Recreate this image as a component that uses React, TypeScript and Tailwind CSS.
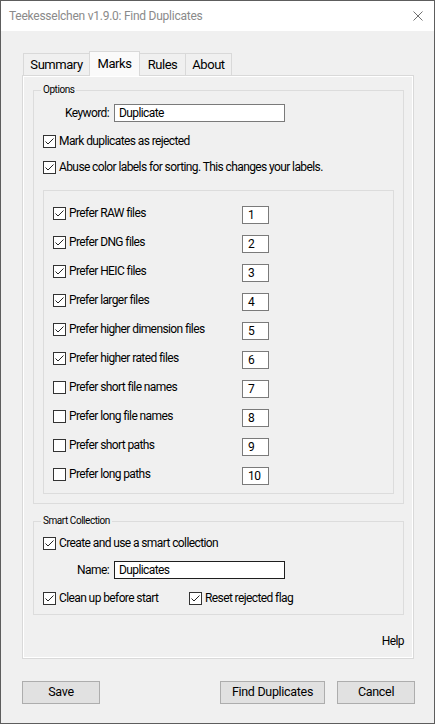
import type { ReactNode } from "react";

const ui = "font-[Roboto,sans-serif] tracking-[-0.6px] text-black";

function CheckBox({ checked }: { checked: boolean }) {
  return (
    <span className="flex h-[13px] w-[13px] shrink-0 items-center justify-center border border-[#333] bg-white">
      {checked && (
        <svg width="11" height="11" viewBox="0 0 11 11">
          <path d="M1.5 5.5 L4 8 L9.5 2.5" fill="none" stroke="#222" strokeWidth="1" />
        </svg>
      )}
    </span>
  );
}

function Check({ label, checked, className = "" }: { label: string; checked: boolean; className?: string }) {
  return (
    <label className={`flex h-[14px] items-center gap-[3px] text-[12px] leading-[14px] ${className}`}>
      <CheckBox checked={checked} />
      <span className="whitespace-nowrap">{label}</span>
    </label>
  );
}

function TextBox({ value, className = "" }: { value: string; className?: string }) {
  return (
    <div className={`flex h-[18px] items-center bg-white pl-[4px] text-[12px] ${className}`}>{value}</div>
  );
}

function Group({ title, className = "", children }: { title: string; className?: string; children: ReactNode }) {
  return (
    <fieldset className={`ml-[9px] w-[371px] border border-[#dcdcdc] ${className}`}>
      <legend className="ml-[7px] px-[2px] text-[10px] leading-[14px] tracking-[-0.45px]">{title}</legend>
      {children}
    </fieldset>
  );
}

const tabs = [
  { name: "Summary", w: "w-[67px]" },
  { name: "Marks", w: "w-[51px]" },
  { name: "Rules", w: "w-[47px]" },
  { name: "About", w: "w-[47px]" },
];

const prefs = [
  { label: "Prefer RAW files", on: true },
  { label: "Prefer DNG files", on: true },
  { label: "Prefer HEIC files", on: true },
  { label: "Prefer larger files", on: true },
  { label: "Prefer higher dimension files", on: true },
  { label: "Prefer higher rated files", on: true },
  { label: "Prefer short file names", on: false },
  { label: "Prefer long file names", on: false },
  { label: "Prefer short paths", on: false },
  { label: "Prefer long paths", on: false },
];

export default function App() {
  return (
    <div className={`flex h-[724px] w-[435px] flex-col border border-[#5d5d5d] bg-[#f0f0f0] ${ui}`}>
      {/* title bar */}
      <div className="flex h-[30px] shrink-0 items-center justify-between bg-white pl-[8px] pr-[11px]">
        <span className="text-[12px] tracking-[-0.25px] text-[#8a8a8a]">Teekesselchen v1.9.0: Find Duplicates</span>
        <svg width="10" height="10" viewBox="0 0 10 10">
          <path d="M0.5 0.5 L9.5 9.5 M9.5 0.5 L0.5 9.5" stroke="#707070" strokeWidth="1" />
        </svg>
      </div>

      {/* tab strip */}
      <div className="ml-[22px] mt-[20px] flex h-[24px] items-end">
        {tabs.map((t, i) => {
          const active = t.name === "Marks";
          return (
            <div
              key={t.name}
              className={`${t.w} ${i > 0 ? "-ml-px" : ""} flex items-center justify-center border border-b-0 border-[#d9d9d9] text-[13px] tracking-[-0.45px] ${
                active ? "relative z-10 -mb-px h-[25px] bg-[#fafafa] pb-[1px]" : "h-[22px] bg-[#f0f0f0]"
              }`}
            >
              {t.name}
            </div>
          );
        })}
      </div>

      {/* tab page */}
      <div className="ml-[21px] h-[584px] w-[392px] border border-[#d9d9d9]">
        <div className="flex h-full flex-col border border-white">
          <Group title="Options" className="mt-[6px] h-[421px]">
            <div className="mt-[7px] flex items-center gap-[5px]">
              <span className="w-[75px] text-right text-[12px]">Keyword:</span>
              <TextBox value="Duplicate" className="w-[171px] border border-[#7a7a7a]" />
            </div>
            <Check className="ml-[9px] mt-[12px]" checked label="Mark duplicates as rejected" />
            <Check className="ml-[9px] mt-[12px]" checked label="Abuse color labels for sorting. This changes your labels." />

            <div className="ml-[9px] mt-[16px] flex h-[304px] w-[351px] flex-col gap-[11px] border border-[#dcdcdc] pt-[15px]">
              {prefs.map((p, i) => (
                <div key={p.label} className="flex h-[18px] items-start">
                  <Check className="ml-[9px] w-[189px]" checked={p.on} label={p.label} />
                  <TextBox value={String(i + 1)} className="w-[27px] border border-[#7a7a7a] pl-[5px]" />
                </div>
              ))}
            </div>
          </Group>

          <Group title="Smart Collection" className="mt-[10px] h-[101px]">
            <Check className="ml-[9px] mt-[8px]" checked label="Create and use a smart collection" />
            <div className="mt-[11px] flex items-center gap-[5px]">
              <span className="w-[75px] text-right text-[12px]">Name:</span>
              <TextBox value="Duplicates" className="w-[171px] border border-[#1e1e1e]" />
            </div>
            <div className="ml-[9px] mt-[12px] flex">
              <Check className="w-[146px]" checked label="Clean up before start" />
              <Check checked label="Reset rejected flag" />
            </div>
          </Group>

          <div className="mt-[19px] h-[14px] pr-[8px] text-right text-[12px] leading-[14px]">Help</div>
        </div>
      </div>

      {/* dialog buttons */}
      <div className="ml-[21px] mt-[22px] flex w-[393px] text-[12.5px] tracking-[-0.3px]">
        <button className="h-[23px] w-[78px] border border-[#adadad] bg-[#e1e1e1]">Save</button>
        <button className="ml-auto h-[23px] w-[105px] border border-[#adadad] bg-[#e1e1e1]">Find Duplicates</button>
        <button className="ml-[12px] h-[23px] w-[78px] border border-[#adadad] bg-[#e1e1e1]">Cancel</button>
      </div>
    </div>
  );
}
